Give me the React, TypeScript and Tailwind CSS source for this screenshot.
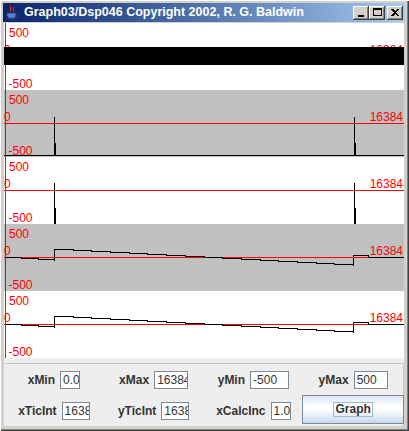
import React from 'react';

const W = 400;
const H = 67;
const Z = 33;

type Pt = [number, number];

// horizontal runs with 1px drops, like Java's integer-plotted line
function stairs(x0: number, y0: number, x1: number, y1: number, n: number): Pt[] {
  const pts: Pt[] = [];
  for (let i = 0; i < n; i++) {
    const xa = Math.round(x0 + ((x1 - x0) * i) / n);
    const xb = Math.round(x0 + ((x1 - x0) * (i + 1)) / n);
    const y = Math.round(y0 + ((y1 - y0) * i) / n);
    pts.push([xa, y], [xb, y]);
  }
  pts.push([x1, y1]);
  return pts;
}

const sawPts: Pt[] = [
  ...stairs(1, Z, 50, Z + 3, 3),
  ...stairs(50, Z - 8, 349, Z + 8, 16),
  [349, Z - 2],
  [364, Z - 2],
  [364, Z],
  [W, Z],
];
const sawLine = sawPts.map(([x, y]) => `${x + 0.5},${y + 0.5}`).join(' ');

function Spike({ x, top, thick, bottom }: { x: number; top: number; thick: number; bottom: number }) {
  return (
    <>
      <rect x={x} y={top} width={1} height={bottom - top} fill="#000" />
      <rect x={x} y={thick} width={2} height={bottom - thick} fill="#000" />
    </>
  );
}

function Plot({ grey, kind }: { grey: boolean; kind: 'band' | 'spec' | 'imp' | 'saw' }) {
  return (
    <svg width={W} height={H} className="block" shapeRendering="crispEdges">
      <rect width={W} height={H} fill={grey ? '#C0C0C0' : '#FFFFFF'} />
      <g fill="#FF0000" fontFamily="'Liberation Sans', Arial, sans-serif" fontSize={12}>
        <text x={5} y={14}>500</text>
        <text x={0} y={31}>0</text>
        <text x={4.5} y={65}>-500</text>
        <text x={399} y={31} textAnchor="end">16384</text>
      </g>
      <rect x={1} y={0} width={1} height={H} fill="#FF0000" />
      <rect x={0} y={Z} width={W} height={1} fill="#FF0000" />

      {kind === 'band' && <rect x={0} y={24} width={W} height={18} fill="#000" />}

      {kind === 'spec' && (
        <>
          <rect x={0} y={65} width={W} height={1} fill="#000" />
          <Spike x={50} top={27} thick={53} bottom={65} />
          <Spike x={350} top={27} thick={53} bottom={65} />
        </>
      )}

      {kind === 'imp' && (
        <>
          <Spike x={50} top={26} thick={51} bottom={67} />
          <Spike x={350} top={26} thick={51} bottom={67} />
        </>
      )}

      {kind === 'saw' && <polyline points={sawLine} fill="none" stroke="#000" strokeWidth={1} />}
    </svg>
  );
}

function CapButton({ children }: { children: React.ReactNode }) {
  return (
    <div className="w-[16px] h-[14px] bg-[#D4D0C8] shadow-[inset_-1px_-1px_0_#404040,inset_1px_1px_0_#ffffff,inset_-2px_-2px_0_#808080] flex items-center justify-center">
      {children}
    </div>
  );
}

function JavaCup() {
  return (
    <svg width="16" height="16" viewBox="0 0 16 16">
      <path d="M7 1c-2 2 1 3-1 5M9.5 2c-1.5 1.5 1 2.5-.5 4" stroke="#E03020" strokeWidth="1.2" fill="none" />
      <path d="M3 8h9v2.5c0 2-2 3-4.5 3S3 12.5 3 10.5z" fill="#5B7FC4" stroke="#2A3F7A" strokeWidth="0.8" />
      <path d="M12 9h1.5a1.3 1.3 0 0 1 0 2.6H12" stroke="#2A3F7A" strokeWidth="0.9" fill="none" />
      <path d="M2 14.2h11" stroke="#2A3F7A" strokeWidth="1" />
    </svg>
  );
}

function Field({ value, w }: { value: string; w: string }) {
  return (
    <div
      className={`${w} h-[18px] bg-white border border-[#7A8A99] pl-[2px] overflow-hidden whitespace-nowrap text-[12px] leading-[16px] text-[#333333]`}
    >
      {value}
    </div>
  );
}

function Pair({ label, value, w }: { label: string; value: string; w: string }) {
  return (
    <div className="flex items-center justify-center gap-[5px]">
      <span className="font-bold text-[12px] text-[#333333]">{label}</span>
      <Field value={value} w={w} />
    </div>
  );
}

export default function App() {
  return (
    <div
      className="w-[409px] h-[431px] bg-[#D4D0C8] pt-[3px] pl-[4px] pr-[5px] pb-[5px] flex flex-col shadow-[inset_1px_1px_0_#ffffff,inset_-1px_-1px_0_#404040,inset_-2px_-2px_0_#808080] overflow-hidden"
      style={{ fontFamily: "'Liberation Sans', Arial, sans-serif" }}
    >
      {/* title bar */}
      <div className="h-[19px] -mx-[1px] flex items-center bg-linear-to-r from-[#0A246A] to-[#A6CAF0] pl-[1px] pr-[2px]">
        <JavaCup />
        <span className="ml-[4px] text-white font-bold text-[12.5px] whitespace-nowrap">
          Graph03/Dsp046 Copyright 2002, R. G. Baldwin
        </span>
        <div className="ml-auto flex items-center">
          <CapButton>
            <div className="w-[6px] h-[2px] bg-black mt-[6px] -ml-[1px]" />
          </CapButton>
          <CapButton>
            <div className="w-[9px] h-[8px] border border-black border-t-2 -mt-[1px]" />
          </CapButton>
          <div className="w-[2px]" />
          <CapButton>
            <svg width="8" height="7" viewBox="0 0 8 7" shapeRendering="crispEdges">
              <path d="M0 0h2l2 2 2-2h2L5 3.5 8 7H6L4 5 2 7H0l3-3.5z" fill="#000" />
            </svg>
          </CapButton>
        </div>
      </div>

      <div className="h-[1px]" />

      {/* plots */}
      <div className="flex flex-col w-[400px]">
        <Plot grey={false} kind="band" />
        <Plot grey={true} kind="spec" />
        <Plot grey={false} kind="imp" />
        <Plot grey={true} kind="saw" />
        <Plot grey={false} kind="saw" />
      </div>

      {/* controls */}
      <div className="flex-1 bg-[#EEEEEE] pt-[5px] flex flex-col">
        <div className="grid grid-cols-4 grid-rows-[31px_31px] border-t border-r border-[#C8C8C8]">
          <Pair label="xMin" value="0.0" w="w-[20px]" />
          <Pair label="xMax" value="16384.0" w="w-[34px]" />
          <Pair label="yMin" value="-500" w="w-[39px]" />
          <Pair label="yMax" value="500" w="w-[34px]" />
          <Pair label="xTicInt" value="1638.4" w="w-[28px]" />
          <Pair label="yTicInt" value="1638.4" w="w-[28px]" />
          <Pair label="xCalcInc" value="1.0" w="w-[20px]" />
          <button className="mx-[-1px] mb-[2px] border border-[#7A8A99] bg-[linear-gradient(to_bottom,#dde8f3_0%,#ffffff_40%,#ffffff_50%,#c6d8ec_100%)] flex items-center justify-center">
            <span className="border border-[#A3B8CC] px-[1px] font-bold text-[12px] leading-[13px] text-[#333333]">
              Graph
            </span>
          </button>
        </div>
      </div>
    </div>
  );
}
